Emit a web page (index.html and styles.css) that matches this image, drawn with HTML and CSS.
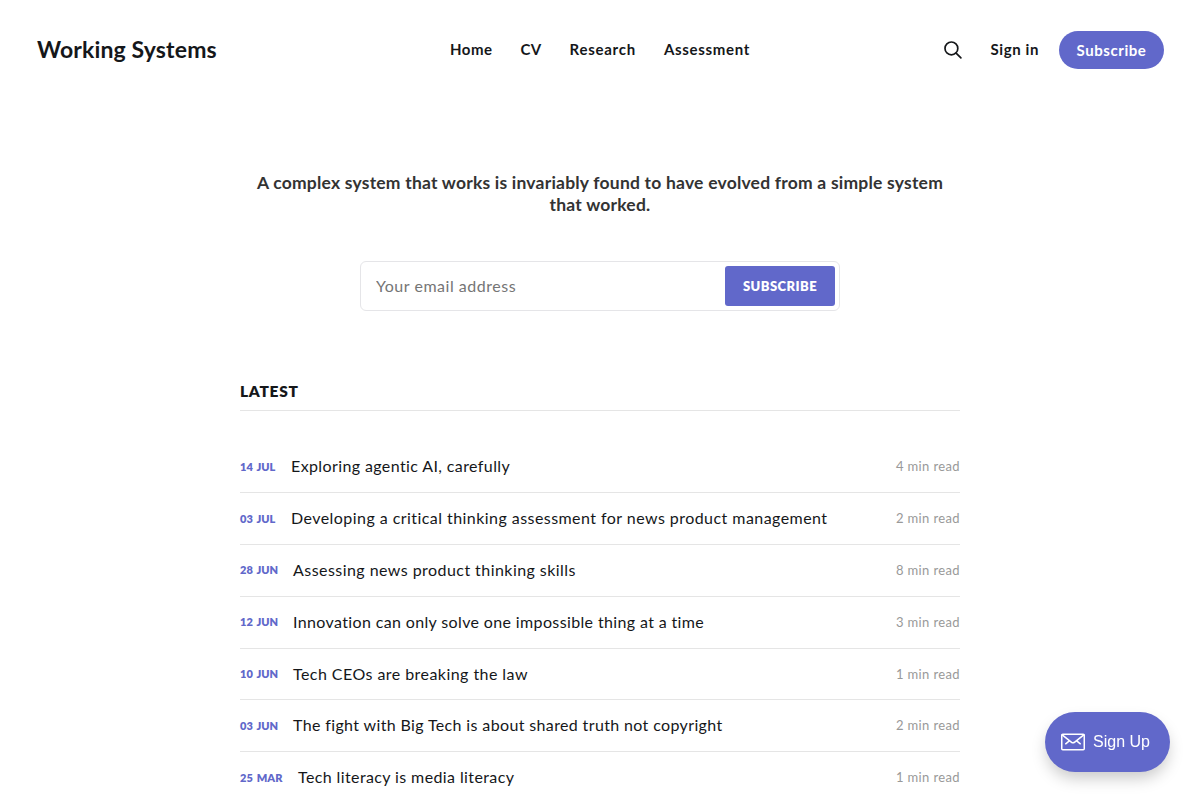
FILE: index.html
```html
<!DOCTYPE html>
<html lang="en">
<head>
    <meta charset="UTF-8">
    <meta name="viewport" content="width=device-width, initial-scale=1.0">
    <title>Working Systems</title>
    <link rel="stylesheet" href="styles.css">
</head>
<body>
    <header class="site-header">
        <a class="logo" href="#">Working Systems</a>
        <nav class="nav">
            <a class="nav-home" href="#">Home</a>
            <a href="#">CV</a>
            <a class="nav-research" href="#">Research</a>
            <a class="nav-assessment" href="#">Assessment</a>
        </nav>
        <div class="actions">
            <button class="search" aria-label="Search">
                <svg width="20" height="20" viewBox="0 0 20 20" fill="none" stroke="#15171a" stroke-width="1.7" stroke-linecap="round"><circle cx="8.4" cy="8.4" r="6.4"/><path d="M13.1 13.1l4.8 4.8"/></svg>
            </button>
            <a class="signin" href="#">Sign in</a>
            <a class="btn" href="#">Subscribe</a>
        </div>
    </header>

    <main class="container">
        <h1 class="tagline">A complex system that works is invariably found to have evolved from a simple system<br>that worked.</h1>
        <form class="form">
            <input type="email" placeholder="Your email address">
            <button type="button">Subscribe</button>
        </form>

        <h2 class="section-title">Latest</h2>
        <div class="feed">
            <a class="post" href="#"><time class="jul">14 Jul</time><h3>Exploring agentic AI, carefully</h3><span class="length">4 min read</span></a>
            <a class="post" href="#"><time class="jul">03 Jul</time><h3 class="wide">Developing a critical thinking assessment for news product management</h3><span class="length">2 min read</span></a>
            <a class="post" href="#"><time class="jun">28 Jun</time><h3 class="wide">Assessing news product thinking skills</h3><span class="length">8 min read</span></a>
            <a class="post" href="#"><time class="jun">12 Jun</time><h3 class="tight">Innovation can only solve one impossible thing at a time</h3><span class="length">3 min read</span></a>
            <a class="post" href="#"><time class="jun">10 Jun</time><h3 class="wide">Tech CEOs are breaking the law</h3><span class="length">1 min read</span></a>
            <a class="post" href="#"><time class="jun">03 Jun</time><h3 class="tight">The fight with Big Tech is about shared truth not copyright</h3><span class="length">2 min read</span></a>
            <a class="post" href="#"><time class="mar">25 Mar</time><h3>Tech literacy is media literacy</h3><span class="length">1 min read</span></a>
        </div>
    </main>

    <button class="portal">
        <svg width="24" height="18" viewBox="0 0 24 18" fill="none" stroke="#fff" stroke-width="1.5" stroke-linecap="round" stroke-linejoin="round"><rect x=".75" y="1.25" width="22.5" height="15.5" rx="1"/><path d="M1.2 1.8l9.1 7.3a2.7 2.7 0 0 0 3.4 0l9.1-7.3M4.7 10.8l3.6-3M19.3 10.8l-3.6-3"/></svg>
        <span>Sign Up</span>
    </button>
</body>
</html>
```

FILE: styles.css
```css
* { box-sizing: border-box; }
body { margin: 0; height: 800px; overflow: hidden; background: #fff; color: #15171a; font-family: Lato, sans-serif; }
a { color: inherit; text-decoration: none; }
button { border: none; font-family: inherit; cursor: pointer; }
h1, h2, h3 { margin: 0; }

.site-header { display: grid; grid-template-columns: 1fr auto 1fr; align-items: center; height: 100px; padding: 0 36px; font-size: 15px; font-weight: 700; }
.logo { padding: 0 0 2px 1px; font-size: 23px; white-space: nowrap; letter-spacing: .15px; }
.nav { display: flex; gap: 28px; padding-bottom: 2px; letter-spacing: .35px; }
.nav-home { letter-spacing: .5px; }
.nav-research { letter-spacing: .75px; }
.nav-assessment { letter-spacing: .68px; }
.actions { display: flex; justify-content: flex-end; align-items: center; }
.search { display: flex; padding: 0; margin-right: 27px; background: none; }
.signin { margin-right: 20px; padding-bottom: 2px; letter-spacing: .6px; }
.btn { width: 105px; height: 38px; line-height: 39px; border-radius: 19px; background: #6168ca; color: #fff; text-align: center; letter-spacing: .55px; }

.container { width: 720px; margin: 0 auto; padding-top: 72px; }
.tagline { color: #333; font-size: 17.5px; line-height: 22px; font-weight: 700; text-align: center; letter-spacing: .21px; white-space: nowrap; }
.form { display: flex; align-items: center; width: 480px; height: 50px; margin: 45px auto 0; padding: 4px; border: 1px solid #e5e5e8; border-radius: 6px; }
.form input { flex: 1; min-width: 0; padding: 0 11px 2px; border: none; outline: none; background: none; font-family: inherit; font-size: 16px; letter-spacing: .52px; }
.form input::placeholder { color: #757575; }
.form button { width: 110px; height: 40px; padding: 0; border-radius: 3px; background: #6168ca; color: #fff; font-size: 13px; font-weight: 800; letter-spacing: .45px; text-transform: uppercase; }

.section-title { height: 100px; padding-top: 70px; border-bottom: 1px solid #e5e5e5; font-size: 15.5px; line-height: 20px; font-weight: 800; letter-spacing: .7px; text-transform: uppercase; }
.feed { padding-top: 30.35px; }
.post { display: flex; align-items: center; height: 51.8px; border-bottom: 1px solid #e5e5e5; }
.post time { margin-right: 15px; padding-bottom: .7px; color: #6168ca; font-size: 11px; font-weight: 800; word-spacing: 1.5px; text-transform: uppercase; white-space: nowrap; }
.jul { width: 36px; }
.jun { width: 38px; }
.mar { width: 43px; }
.post h3 { padding-bottom: 1.6px; font-size: 16px; font-weight: 400; letter-spacing: .39px; white-space: nowrap; }
.post .wide { letter-spacing: .445px; }
.post .tight { letter-spacing: .365px; }
.length { margin-left: auto; padding-bottom: .6px; color: #999; font-size: 13px; letter-spacing: .37px; }

.portal { position: fixed; right: 30px; bottom: 28px; display: flex; align-items: center; gap: 8px; width: 125px; height: 60px; padding: 0 16px; border-radius: 30px; background: #6168ca; color: #fff; font: 16px "Liberation Sans", Arial, sans-serif; white-space: nowrap; box-shadow: 0 8px 16px -2px rgba(0, 0, 0, .22); }
.portal svg { flex: none; }
```
